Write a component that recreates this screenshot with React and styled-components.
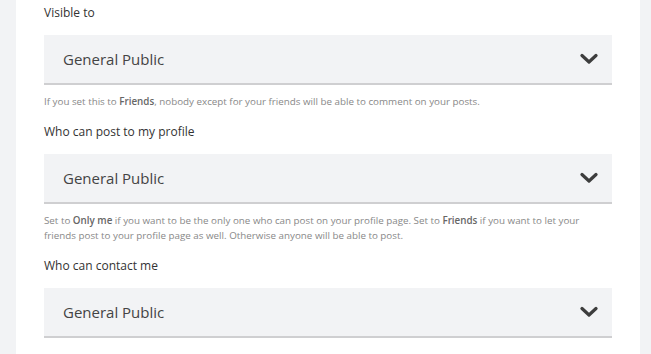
import React from 'react';
import styled, { createGlobalStyle } from 'styled-components';

const GlobalStyle = createGlobalStyle`
  html, body {
    margin: 0;
    padding: 0;
    background: #f2f3f5;
    font-family: "Open Sans", "Noto Sans", sans-serif;
  }
`;

const fields = [
  {
    label: 'Visible to',
    value: 'General Public',
    help: (
      <>
        If you set this to <b>Friends</b>, nobody except for your friends will be able to comment on your posts.
      </>
    ),
  },
  {
    label: 'Who can post to my profile',
    value: 'General Public',
    help: (
      <>
        Set to <b>Only me</b> if you want to be the only one who can post on your profile page. Set to <b>Friends</b> if
        you want to let your friends post to your profile page as well. Otherwise anyone will be able to post.
      </>
    ),
  },
  {
    label: 'Who can contact me',
    value: 'General Public',
  },
];

const Chevron = () => (
  <svg width="18" height="12" viewBox="0 0 18 12">
    <polyline points="2,2.5 9,9 16,2.5" fill="none" stroke="#3d3d3d" strokeWidth="3.2" strokeLinecap="round" strokeLinejoin="round" />
  </svg>
);

export default function App() {
  return (
    <>
      <GlobalStyle />
      <Panel>
        {fields.map((field) => (
          <Field key={field.label}>
            <Label>{field.label}</Label>
            <Select>
              <span>{field.value}</span>
              <Chevron />
            </Select>
            {field.help && <Help>{field.help}</Help>}
          </Field>
        ))}
      </Panel>
    </>
  );
}

const Panel = styled.div`
  margin: 0 11px 0 16px;
  padding: 4px 28px 40px 28px;
  background: #fff;
  min-height: 354px;
  box-sizing: border-box;
`;

const Field = styled.div`
  display: flex;
  flex-direction: column;
  margin-bottom: 14px;
`;

const Label = styled.div`
  font-size: 12px;
  line-height: 18px;
  color: #333;
  margin-bottom: 13px;
`;

const Select = styled.div`
  height: 48px;
  display: flex;
  align-items: center;
  justify-content: space-between;
  padding: 0 14px 0 19px;
  background: #f2f3f5;
  border-bottom: 2px solid #cfcfd1;
  font-size: 15px;
  color: #444;

  svg {
    display: block;
  }
`;

const Help = styled.p`
  margin: 9px 0 0 0;
  font-size: 9.8px;
  line-height: 15px;
  color: #888;

  b {
    font-weight: 600;
    color: #666;
  }
`;
